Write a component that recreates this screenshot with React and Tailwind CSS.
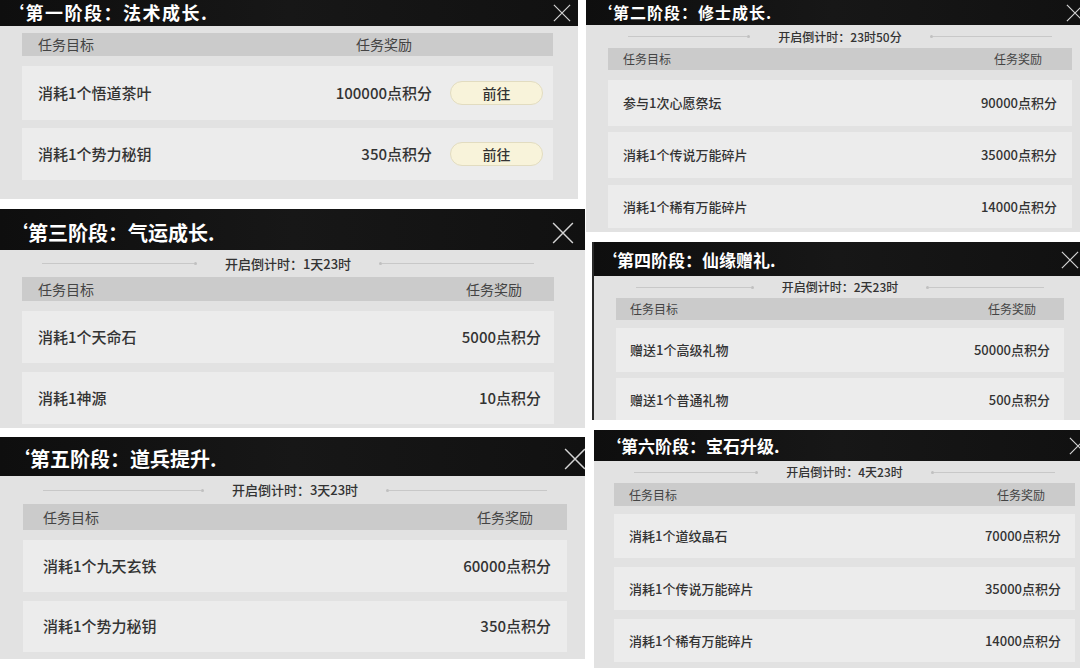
import React from 'react'

const FONT = "font-['Noto_Sans_CJK_SC','Noto_Sans',sans-serif]"

const panels = [
  {
    key: 'p1',
    box: 'w-[578px] h-[199px]',
    head: 'h-[26px] pl-[6px]',
    title: 'text-[18px] tracking-[1.5px]',
    x: 'w-[18px] h-[18px] mr-[7px]',
    name: '第一阶段：法术成长.',
    body: 'pt-[7px] pl-[22px] pr-[25px]',
    bar: 'h-[23px] text-[14px] pl-[16px]',
    rowText: 'text-[15px] pl-[16px]',
    rows: [
      ['消耗1个悟道茶叶', '100000点积分', 'mt-[10px] h-[54px]'],
      ['消耗1个势力秘钥', '350点积分', 'mt-[8px] h-[52px]'],
    ],
    button: true,
  },
  {
    key: 'p3',
    box: 'w-[585px] h-[219px] mt-[10px]',
    head: 'h-[41px] pl-[8px] pt-[7px]',
    title: 'text-[20px]',
    x: 'w-[22px] h-[22px] mr-[11px]',
    name: '第三阶段：气运成长.',
    countdown: '开启倒计时：1天23时',
    cd: 'h-[27px] text-[13px] px-[20px]',
    body: 'pl-[22px] pr-[31px]',
    bar: 'h-[24px] text-[14px] pl-[16px] pr-[32px]',
    rowText: 'text-[15px] pl-[16px] pr-[13px]',
    rows: [
      ['消耗1个天命石', '5000点积分', 'mt-[10px] h-[52px]'],
      ['消耗1神源', '10点积分', 'mt-[9px] h-[52px]'],
    ],
  },
  {
    key: 'p5',
    box: 'w-[585px] h-[222px] mt-[9px]',
    head: 'h-[39px] pl-[10px] pt-[5px]',
    title: 'text-[20px]',
    x: 'w-[22px] h-[22px] -mr-[1px]',
    name: '第五阶段：道兵提升.',
    countdown: '开启倒计时：3天23时',
    cd: 'h-[28px] text-[13px] px-[20px]',
    body: 'pl-[23px] pr-[18px]',
    bar: 'h-[26px] text-[14px] pl-[20px] pr-[34px]',
    rowText: 'text-[15px] pl-[20px] pr-[16px]',
    rows: [
      ['消耗1个九天玄铁', '60000点积分', 'mt-[10px] h-[52px]'],
      ['消耗1个势力秘钥', '350点积分', 'mt-[9px] h-[51px]'],
    ],
  },
]

const rightPanels = [
  {
    key: 'p2',
    box: 'w-[494px] h-[232px]',
    head: 'h-[25px] pl-[10px]',
    title: 'text-[16px] tracking-[1px]',
    x: 'w-[18px] h-[18px] -mr-[4px]',
    name: '第二阶段：修士成长.',
    countdown: '开启倒计时：23时50分',
    cd: 'h-[23px] text-[12px] px-[20px]',
    body: 'pl-[22px] pr-[8px]',
    bar: 'h-[22px] text-[12px] pl-[15px] pr-[30px]',
    rowText: 'text-[13px] pl-[15px] pr-[15px]',
    rows: [
      ['参与1次心愿祭坛', '90000点积分', 'mt-[10px] h-[46px]'],
      ['消耗1个传说万能碎片', '35000点积分', 'mt-[6px] h-[46px]'],
      ['消耗1个稀有万能碎片', '14000点积分', 'mt-[7px] h-[43px]'],
    ],
  },
  {
    key: 'p4',
    box: 'w-[488px] h-[178px] mt-[10px] ml-[6px] border-l-[2px] border-[#2a2a2a]',
    head: 'h-[34px] pl-[6px] pt-[2px]',
    title: 'text-[17px]',
    x: 'w-[18px] h-[18px] mr-[1px]',
    name: '第四阶段：仙缘赠礼.',
    countdown: '开启倒计时：2天23时',
    cd: 'h-[22px] text-[12px] px-[20px]',
    body: 'pl-[22px] pr-[16px]',
    bar: 'h-[22px] text-[12px] pl-[14px] pr-[28px]',
    rowText: 'text-[13px] pl-[14px] pr-[14px]',
    rows: [
      ['赠送1个高级礼物', '50000点积分', 'mt-[8px] h-[44px]'],
      ['赠送1个普通礼物', '500点积分', 'mt-[6px] h-[44px]'],
    ],
  },
  {
    key: 'p6',
    box: 'w-[486px] h-[238px] mt-[10px] ml-[8px]',
    head: 'h-[31px] pl-[10px] pt-[1px]',
    title: 'text-[17px]',
    x: 'w-[18px] h-[18px] -mr-[7px]',
    name: '第六阶段：宝石升级.',
    countdown: '开启倒计时：4天23时',
    cd: 'h-[22px] text-[12px] px-[20px]',
    body: 'pl-[20px] pr-[5px]',
    bar: 'h-[23px] text-[12px] pl-[15px] pr-[30px]',
    rowText: 'text-[13px] pl-[15px] pr-[14px]',
    rows: [
      ['消耗1个道纹晶石', '70000点积分', 'mt-[8px] h-[44px]'],
      ['消耗1个传说万能碎片', '35000点积分', 'mt-[9px] h-[43px]'],
      ['消耗1个稀有万能碎片', '14000点积分', 'mt-[9px] h-[43px]'],
    ],
  },
]

function CloseIcon({ className }) {
  return (
    <svg viewBox="0 0 20 20" className={`shrink-0 ${className}`} fill="none" stroke="#d4d4d4" strokeWidth="1.3">
      <path d="M1 1 L19 19 M19 1 L1 19" />
    </svg>
  )
}

function Countdown({ text, className }) {
  return (
    <div className={`flex items-center shrink-0 text-[#333] font-medium ${className}`}>
      <div className="flex-1 flex items-center">
        <div className="flex-1 h-px bg-[#c8c8c8]" />
        <div className="w-[3px] h-[3px] rounded-full bg-[#c0c0c0]" />
      </div>
      <span className="mx-[28px]">{text}</span>
      <div className="flex-1 flex items-center">
        <div className="w-[3px] h-[3px] rounded-full bg-[#c0c0c0]" />
        <div className="flex-1 h-px bg-[#c8c8c8]" />
      </div>
    </div>
  )
}

function Panel({ p }) {
  const title = '‘' + p.name
  return (
    <div className={`flex flex-col overflow-hidden bg-[#e2e2e2] shrink-0 ${p.box}`}>
      <div className={`flex items-center justify-between shrink-0 bg-gradient-to-r from-[#0e0e0e] via-[#171717] to-[#111] ${p.head}`}>
        <span className={`text-white font-semibold leading-[1.2] whitespace-nowrap ${p.title}`}>{title}</span>
        <CloseIcon className={p.x} />
      </div>
      <div className={`flex flex-col ${p.body}`}>
        {p.countdown && <Countdown text={p.countdown} className={p.cd} />}
        <div className={`flex items-center justify-between shrink-0 bg-[#cbcbcb] text-[#444] ${p.bar}`}>
          <span>任务目标</span>
          <span className={p.button ? 'mr-[141px]' : ''}>任务奖励</span>
        </div>
        {p.rows.map(([goal, reward, cls]) => (
          <div
            key={goal}
            className={`flex items-center justify-between shrink-0 bg-[#ececec] text-[#333] font-medium ${p.rowText} ${cls}`}
          >
            <span>{goal}</span>
            {p.button ? (
              <div className="flex items-center">
                <span>{reward}</span>
                <button className="ml-[18px] mr-[10px] w-[93px] h-[24px] rounded-full bg-[#f8f3da] border border-[#e2dcc0] text-[14px] text-[#333]">
                  前往
                </button>
              </div>
            ) : (
              <span>{reward}</span>
            )}
          </div>
        ))}
      </div>
    </div>
  )
}

export default function App() {
  return (
    <div className={`w-[1080px] h-[668px] overflow-hidden bg-white flex ${FONT}`}>
      <div className="w-[586px] flex flex-col shrink-0">
        {panels.map((p) => (
          <Panel key={p.key} p={p} />
        ))}
      </div>
      <div className="flex-1 flex flex-col overflow-hidden">
        {rightPanels.map((p) => (
          <Panel key={p.key} p={p} />
        ))}
      </div>
    </div>
  )
}
